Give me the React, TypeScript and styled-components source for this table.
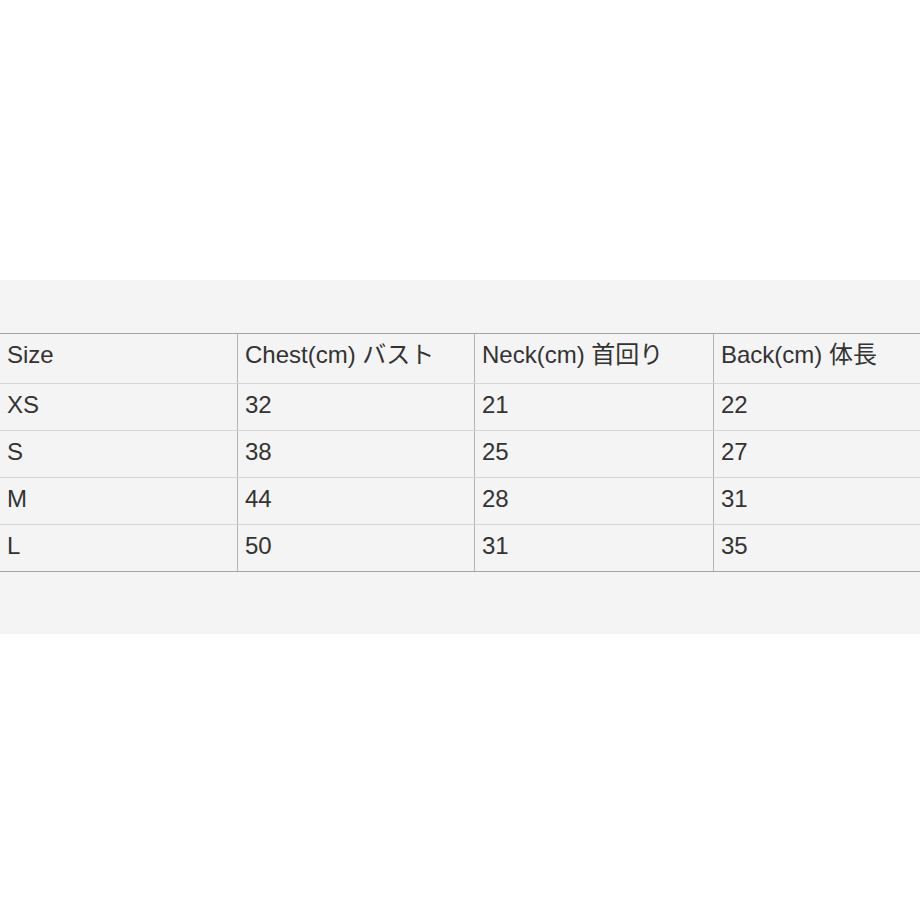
import React from "react";
import styled, { createGlobalStyle } from "styled-components";

const Global = createGlobalStyle`
  html, body { margin: 0; padding: 0; background: #ffffff; }
  body { font-family: "Liberation Sans", "Noto Sans CJK JP", sans-serif; }
`;

const Page = styled.div`
  width: 920px;
  height: 920px;
  background: #ffffff;
  padding-top: 280px;
  box-sizing: border-box;
  overflow: hidden;
`;

const Panel = styled.section`
  background: #f4f4f4;
  height: 354px;
  box-sizing: border-box;
  padding-top: 53px;
  overflow: hidden;
`;

const Table = styled.div`
  width: 952px;
  border-top: 1px solid #a4a4a4;
  border-bottom: 1px solid #a4a4a4;
`;

const Row = styled.div<{ $header?: boolean }>`
  display: grid;
  grid-template-columns: 238px 237px 239px 238px;
  height: ${(p) => (p.$header ? "49px" : "47px")};
  box-sizing: border-box;
  border-top: ${(p) => (p.$header ? "none" : "1px solid #d6d6d6")};
`;

const Cell = styled.div<{ $last?: boolean }>`
  box-sizing: border-box;
  padding: 8px 0 0 7px;
  font-size: 24px;
  line-height: 25px;
  color: #333333;
  white-space: nowrap;
  border-right: ${(p) => (p.$last ? "none" : "1px solid #b4b4b4")};
`;

const header = ["Size", "Chest(cm) バスト", "Neck(cm) 首回り", "Back(cm) 体長"];
const rows = [
  ["XS", "32", "21", "22"],
  ["S", "38", "25", "27"],
  ["M", "44", "28", "31"],
  ["L", "50", "31", "35"],
];

export default function App() {
  return (
    <Page>
      <Global />
      <Panel>
        <Table>
          <Row $header>
            {header.map((h, i) => (
              <Cell key={i} $last={i === 3}>
                {h}
              </Cell>
            ))}
          </Row>
          {rows.map((r, ri) => (
            <Row key={ri}>
              {r.map((c, i) => (
                <Cell key={i} $last={i === 3}>
                  {c}
                </Cell>
              ))}
            </Row>
          ))}
        </Table>
      </Panel>
    </Page>
  );
}
